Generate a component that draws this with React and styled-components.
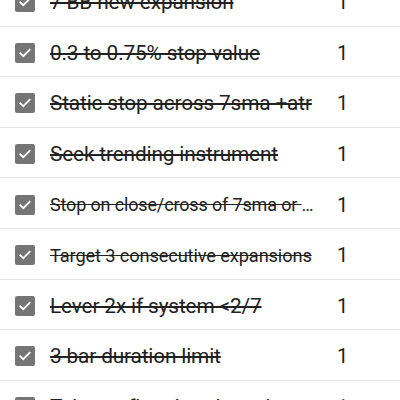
import React from 'react';
import styled, { createGlobalStyle } from 'styled-components';

const GlobalStyle = createGlobalStyle`
    html, body {
        margin: 0;
        padding: 0;
        background: #ffffff;
        font-family: Roboto, "Noto Sans", sans-serif;
        overflow: hidden;
    }
`;

const List = styled.div`
    margin-top: -24px;
    width: 400px;
`;

const Row = styled.div`
    display: flex;
    align-items: center;
    height: 50.6px;
    padding: 3px 0 0 15px;
    border-bottom: 1px solid #e6e6e6;
    box-sizing: border-box;
`;

const Box = styled.span`
    flex: 0 0 auto;
    width: 20px;
    height: 20px;
    border-radius: 2px;
    background: #757575;
    display: flex;
    align-items: center;
    justify-content: center;
    margin-right: 15px;
`;

const Label = styled.span`
    flex: 1 1 auto;
    min-width: 0;
    font-size: ${(p) => p.$size || 20.8}px;
    letter-spacing: -0.15px;
    color: #212121;
    text-decoration: line-through;
    white-space: nowrap;
    overflow: hidden;
    text-overflow: ellipsis;
    padding-right: 18px;
`;

const Count = styled.span`
    flex: 0 0 63px;
    font-size: 20px;
    color: #212121;
`;

const items = [
    { text: '7 BB new expansion' },
    { text: '0.3 to 0.75% stop value' },
    { text: 'Static stop across 7sma +atr' },
    { text: 'Seek trending instrument' },
    { text: 'Stop on close/cross of 7sma or 9ema', size: 18 },
    { text: 'Target 3 consecutive expansions', size: 18.3 },
    { text: 'Lever 2x if system <2/7' },
    { text: '3 bar duration limit' },
    { text: 'Take profit at band touch' },
];

const Check = () => (
    <svg width="14" height="14" viewBox="0 0 24 24">
        <path d="M4 12.5l5 5L20 6.5" fill="none" stroke="#fff" strokeWidth="3.2" strokeLinecap="square" />
    </svg>
);

const App = () => (
    <>
        <GlobalStyle />
        <List>
            {items.map((item) => (
                <Row key={item.text}>
                    <Box><Check /></Box>
                    <Label $size={item.size}>{item.text}</Label>
                    <Count>1</Count>
                </Row>
            ))}
        </List>
    </>
);

export default App;
